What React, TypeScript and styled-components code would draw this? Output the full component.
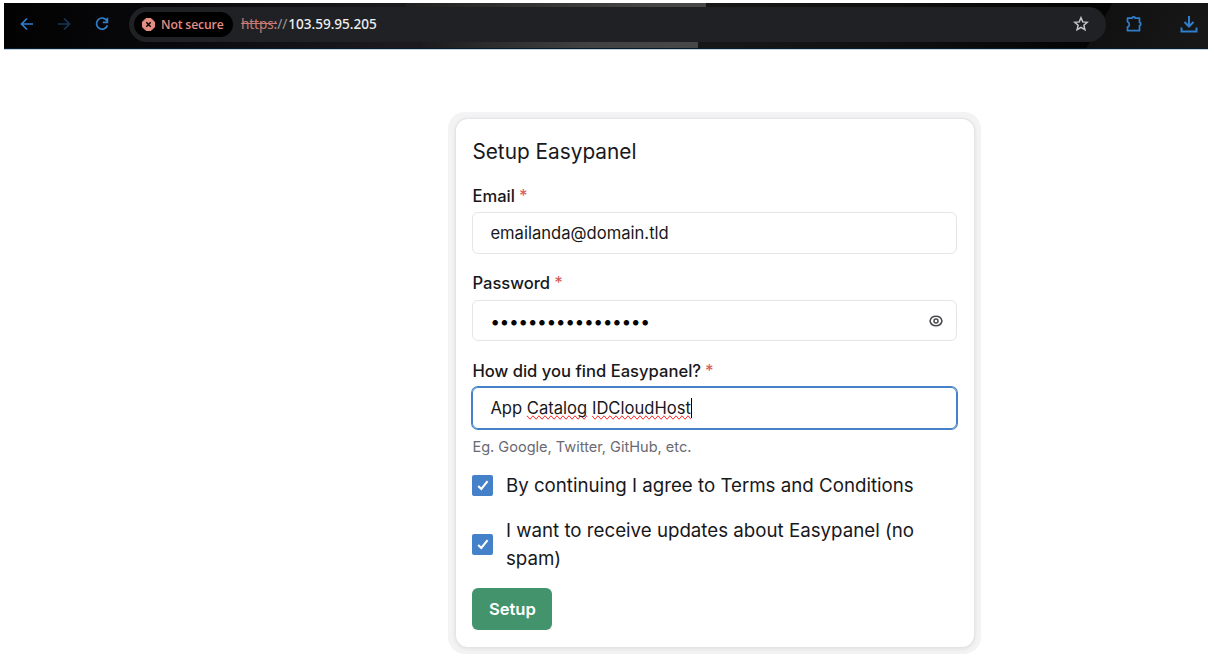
import React from "react";
import styled, { createGlobalStyle } from "styled-components";

const Global = createGlobalStyle`
  * { box-sizing: border-box; }
  body { margin: 0; background: #fff; font-family: Inter, "Liberation Sans", sans-serif; color: #18181b; }
`;

const Page = styled.div`
  width: 1214px;
  height: 672px;
  padding: 3px 6px 0 4px;
  overflow: hidden;
`;

const Toolbar = styled.header`
  display: flex;
  align-items: center;
  height: 47px;
  padding-bottom: 4px;
  border-bottom: 1px solid #c3d3de;
  background:
    linear-gradient(#07192b, #07192b) 0 100% / 100% 1px no-repeat,
    linear-gradient(90deg, #202020, #303030 35%, #454545 80%, #484848) 402px 0 / 300px 5px no-repeat,
    linear-gradient(90deg, #1d1b1d, #292929 20%, #414141 60%, #474747) 418px 38px / 276px 7px no-repeat,
    linear-gradient(120deg, transparent 0 28%, #111 29%, #181818) 1060px 0 / 144px 45px no-repeat,
    linear-gradient(90deg, #020203, #09080a 14%, #1c1a1c 32%, #171717 60%, #101010 74%, #040405 90%, #090909);
`;

const NavIcon = styled.svg<{ $gap: number; $size?: number; $dim?: boolean; $heavy?: boolean }>`
  flex: none;
  width: ${(p) => p.$size ?? 16}px;
  height: ${(p) => p.$size ?? 16}px;
  margin-left: ${(p) => p.$gap}px;
  fill: none;
  stroke: #2f7fcb;
  stroke-width: ${(p) => (p.$heavy ? 2 : 1.7)};
  opacity: ${(p) => (p.$dim ? 0.42 : 1)};
`;

const AddressBar = styled.div`
  display: flex;
  align-items: center;
  width: 977px;
  height: 35px;
  margin-left: 19px;
  padding: 0 17px 0 5px;
  border-radius: 18px;
  background: #202124;
  font-family: "Noto Sans", "Open Sans", sans-serif;
`;

const Security = styled.div`
  display: flex;
  align-items: center;
  width: 99px;
  height: 25px;
  padding-left: 8px;
  gap: 6px;
  border-radius: 13px;
  background: #000;
  color: #e58e84;
  font-family: "Open Sans", sans-serif;
  font-weight: 600;
  font-size: 12.2px;
  letter-spacing: -0.15px;
  white-space: nowrap;
`;

const Url = styled.div`
  flex: 1;
  margin-left: 8px;
  color: #eeeff1;
  font-size: 13.6px;
  line-height: 18px;
  padding-bottom: 1px;
`;
const Scheme = styled.span`
  color: #c77b74;
  text-decoration: line-through;
  letter-spacing: -0.1px;
`;
const Slashes = styled.span`
  color: #999a9d;
`;
const Host = styled.span`
  margin-left: 1px;
  font-weight: 500;
  letter-spacing: -0.03px;
`;

const Main = styled.main`
  display: flex;
  padding: 62px 0 0 444px;
`;

const Frame = styled.div`
  width: 533px;
  height: 542px;
  padding: 7px 7px 7px 7.5px;
  border-radius: 17px;
  background: #f3f3f4;
`;

const Card = styled.form`
  width: 518.5px;
  height: 528px;
  padding: 16.5px 17.1px 17px 16.9px;
  border-radius: 12px;
  background: #fff;
  box-shadow: 0 0 1px 1px #e4e4e8, 0 1px 4px #d7d7db;
`;

const Title = styled.h1`
  margin: 0 0 16.4px;
  font-size: 20.8px;
  line-height: 32px;
  font-weight: 400;
`;

const Label = styled.label`
  display: block;
  margin-bottom: 4.3px;
  font-size: 16.6px;
  line-height: 24px;
  font-weight: 500;
`;
const Required = styled.span`
  margin-left: 4px;
  color: #d9605c;
`;

const Field = styled.div`
  height: 87.4px;
`;

const Box = styled.div<{ $focus?: boolean }>`
  display: flex;
  align-items: center;
  height: 41.6px;
  padding: 0.7px 13px 0 17px;
  border: 1px solid ${(p) => (p.$focus ? "#4581c9" : "#e6e6e8")};
  border-radius: 6px;
  box-shadow: ${(p) => (p.$focus ? "0 0 0 1px #4581c9" : "none")};
  font-size: 16.6px;
  white-space: pre;
`;

const Dots = styled.div`
  display: flex;
  flex: 1;
  padding-top: 1px;
`;
const Dot = styled.span`
  display: flex;
  justify-content: center;
  width: 9.375px;
  color: #050505;
  font-size: 17.5px;
`;

const Misspelled = styled.span`
  text-decoration: underline wavy #e0524e 1px;
  text-decoration: spelling-error;
`;
const Caret = styled.span`
  width: 1px;
  height: 20px;
  background: #000;
`;

const Help = styled.div`
  margin: 8px 0 14.9px;
  font-size: 14.55px;
  line-height: 20px;
  color: #6a6a73;
`;

const Option = styled.label<{ $gap: number }>`
  display: flex;
  align-items: center;
  gap: 12.5px;
  margin-bottom: ${(p) => p.$gap}px;
  font-size: 18.72px;
  line-height: 28px;
`;

const OptionText = styled.span`
  padding-top: 0.8px;
  margin-bottom: -0.8px;
`;

const Check = styled.span`
  display: flex;
  align-items: center;
  justify-content: center;
  flex: none;
  width: 21px;
  height: 21px;
  border-radius: 2px;
  background: #4581c9;
`;

const Submit = styled.button`
  display: block;
  width: 80px;
  height: 41.5px;
  padding: 0;
  border: 0;
  border-radius: 6px;
  background: #43936c;
  color: #fff;
  font: 600 16.6px Inter, sans-serif;
`;

const Tick = () => (
  <Check>
    <svg width="12" height="11" viewBox="0 0 12 11" fill="none" stroke="#fff" strokeWidth="2.1">
      <path d="M1.2 6 4.3 9 10.6 1.2" />
    </svg>
  </Check>
);

export default function App() {
  return (
    <Page>
      <Global />
      <Toolbar>
        <NavIcon $gap={15} viewBox="0 0 16 16">
          <path d="M14 8H2.5M8 2.5 2.5 8 8 13.5" />
        </NavIcon>
        <NavIcon $gap={21} $dim viewBox="0 0 16 16">
          <path d="M2 8h11.5M8 2.5 13.5 8 8 13.5" />
        </NavIcon>
        <NavIcon $gap={22} viewBox="0 0 16 16">
          <path d="M12.9 4.7A5.6 5.6 0 1 0 13.4 9.4M13.4 1.8v4.5H8.8" />
        </NavIcon>
        <AddressBar>
          <Security>
            <svg width="13" height="13" viewBox="0 0 13 13">
              <path d="M4 .5h5L12.5 4v5L9 12.5H4L.5 9V4Z" fill="#e58e84" stroke="#e58e84" strokeLinejoin="round" />
              <path d="m4.3 4.3 4.4 4.4m0-4.4L4.3 8.7" stroke="#000" strokeWidth="1.4" />
            </svg>
            Not secure
          </Security>
          <Url>
            <Scheme>https:</Scheme>
            <Slashes>//</Slashes>
            <Host>103.59.95.205</Host>
          </Url>
          <svg width="16" height="16" viewBox="0 0 16 16" fill="none" stroke="#c5c6c8" strokeWidth="1.5">
            <path d="m8 1.7 1.75 4.2 4.55.4-3.45 3 1.05 4.4L8 11.3l-3.9 2.4 1.05-4.4-3.45-3 4.55-.4Z" />
          </svg>
        </AddressBar>
        <NavIcon $gap={19} $size={18} viewBox="0 0 18 18">
          <path d="M2.5 3.2H7a1.6 1.3 0 0 1 3.2 0h4.3v4.2a1.3 1.6 0 0 1 0 3.2v5.1h-12v-3.6c2.4-1 2.4-4.3 0-5.3Z" strokeLinejoin="round" />
        </NavIcon>
        <NavIcon $gap={37} $size={18} $heavy viewBox="0 0 18 18">
          <path d="M9 1v10M4.5 7 9 11.5 13.5 7M1.5 12.5v4h15v-4" />
        </NavIcon>
      </Toolbar>
      <Main>
        <Frame>
          <Card>
            <Title>Setup Easypanel</Title>
            <Field>
              <Label>Email<Required>*</Required></Label>
              <Box>emailanda@domain.tld</Box>
            </Field>
            <Field>
              <Label>Password<Required>*</Required></Label>
              <Box>
                <Dots>{Array.from({ length: 17 }, (_, i) => <Dot key={i}>•</Dot>)}</Dots>
                <svg width="14" height="12" viewBox="0 0 14 12" fill="none" stroke="#4b4b4f" strokeWidth="1.5">
                  <path d="M1 6C2.4-.3 11.6-.3 13 6 11.6 12.3 2.4 12.3 1 6Z" />
                  <circle cx="7" cy="6" r="2" />
                </svg>
              </Box>
            </Field>
            <Label>How did you find Easypanel?<Required>*</Required></Label>
            <Box $focus>
              <span>App <Misspelled>Catalog</Misspelled> <Misspelled>IDCloudHost</Misspelled></span>
              <Caret />
            </Box>
            <Help>Eg. Google, Twitter, GitHub, etc.</Help>
            <Option $gap={17}><Tick /><OptionText>By continuing I agree to Terms and Conditions</OptionText></Option>
            <Option $gap={16}><Tick /><OptionText>I want to receive updates about Easypanel (no spam)</OptionText></Option>
            <Submit type="button">Setup</Submit>
          </Card>
        </Frame>
      </Main>
    </Page>
  );
}
